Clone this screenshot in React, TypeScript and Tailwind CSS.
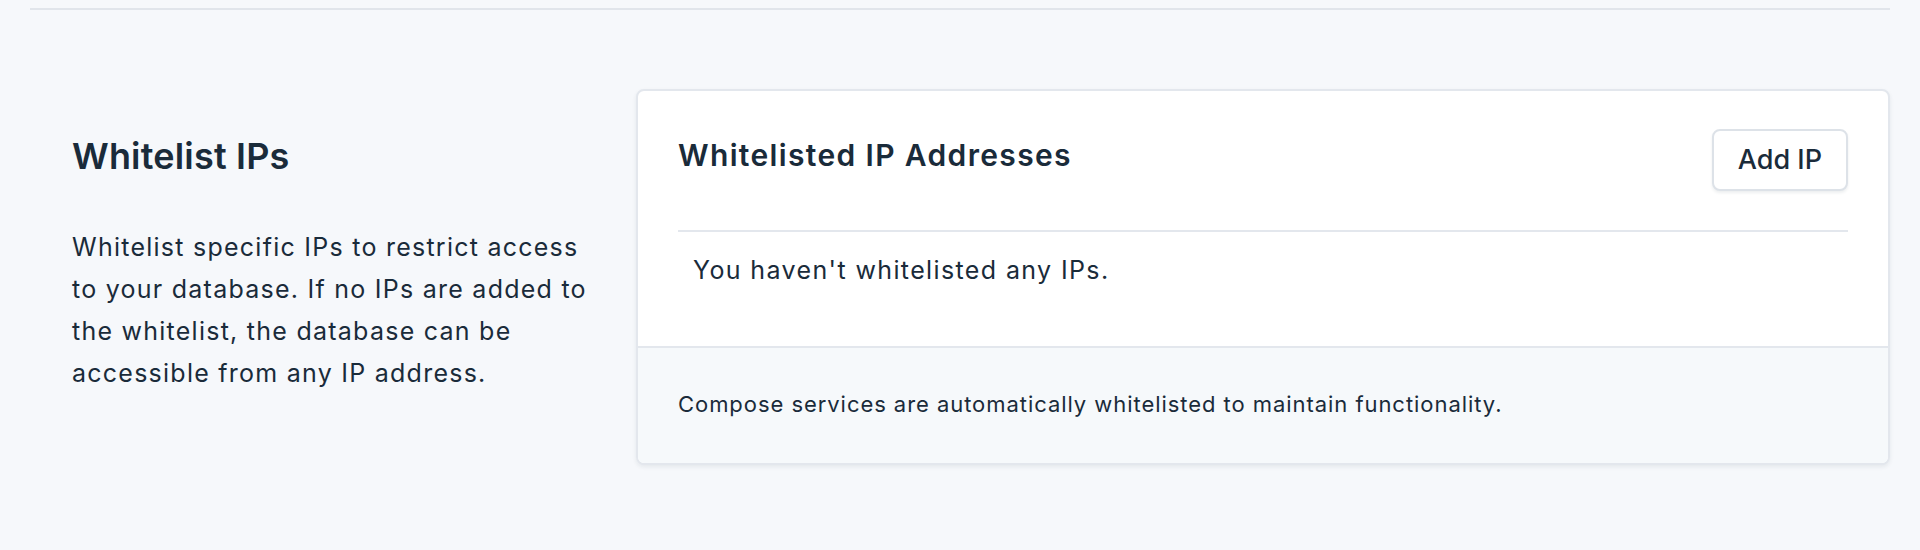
import React from 'react'

const font = { fontFamily: 'Inter, "Noto Sans", sans-serif' }

export default function App() {
  return (
    <div className="min-h-[550px] bg-[#f6f8fb] px-[30px] pt-2 text-[#1a2b3a]" style={font}>
      <div className="border-t-2 border-[#e1e5eb]" />

      <section className="mt-[79px] flex items-start">
        {/* 左侧说明 */}
        <div className="w-[606px] shrink-0 pl-[42px] pr-[30px] pt-[45px]">
          <h2 className="text-[36px] leading-[44px] font-semibold tracking-[0.005em]">Whitelist IPs</h2>
          <p className="mt-[48px] text-[25px] leading-[42px] tracking-[0.05em]">
            Whitelist specific IPs to restrict access to your database. If no IPs are added to the
            whitelist, the database can be accessible from any IP address.
          </p>
        </div>

        {/* 卡片 */}
        <div className="flex-1 overflow-hidden rounded-[8px] border-2 border-[#e3e7ed] bg-white shadow-[0_2px_4px_rgba(30,45,60,0.08)]">
          <div className="px-[40px]">
            <div className="flex items-start justify-between border-b-2 border-[#e3e7ed] pt-[38px] pb-[39px]">
              <h3 className="mt-[7px] text-[30px] leading-[38px] font-semibold tracking-[0.045em]">
                Whitelisted IP Addresses
              </h3>
              <button className="rounded-[8px] border-2 border-[#dde2e8] bg-white px-[24px] py-[12px] text-[27px] leading-[34px] font-medium shadow-[0_2px_3px_rgba(30,45,60,0.08)]">
                Add IP
              </button>
            </div>
            <div className="pt-[18px] pb-[56px] pl-[15px] text-[25px] leading-[40px] tracking-[0.055em]">
              You haven't whitelisted any IPs.
            </div>
          </div>
          <div className="border-t-2 border-[#e3e7ed] bg-[#f6f9fb] px-[40px] pt-[40px] pb-[43px] text-[22px] leading-[32px] tracking-[0.043em]">
            Compose services are automatically whitelisted to maintain functionality.
          </div>
        </div>
      </section>
    </div>
  )
}
